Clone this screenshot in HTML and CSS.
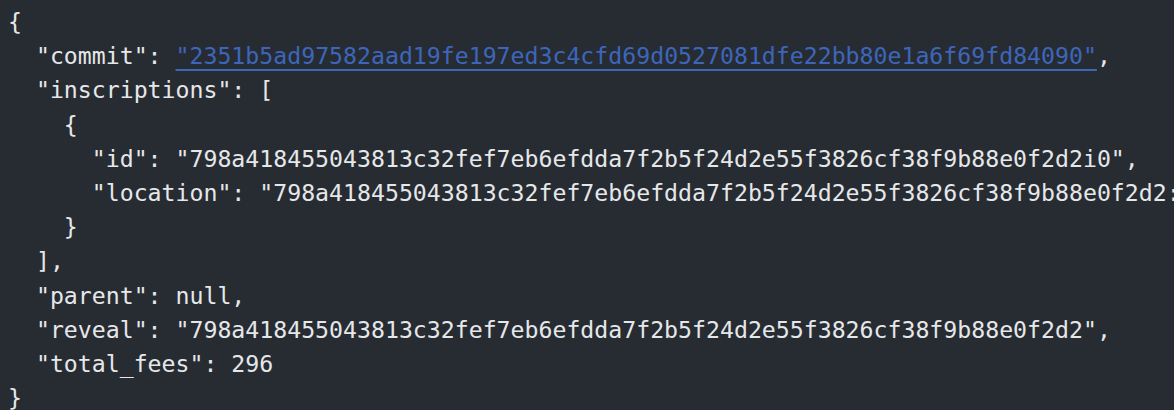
FILE: index.html
```html
<!DOCTYPE html>
<html>
<head>
    <meta name="viewport" content="width=device-width, initial-scale=1.0">
    <link rel="stylesheet" href="styles.css">
</head>
<body>
<pre class="json">{
  "commit": <a class="json-link" href="#">"2351b5ad97582aad19fe197ed3c4cfd69d0527081dfe22bb80e1a6f69fd84090"</a>,
  "inscriptions": [
    {
      "id": "798a418455043813c32fef7eb6efdda7f2b5f24d2e55f3826cf38f9b88e0f2d2i0",
      "location": "798a418455043813c32fef7eb6efdda7f2b5f24d2e55f3826cf38f9b88e0f2d2:0:0"
    }
  ],
  "parent": null,
  "reveal": "798a418455043813c32fef7eb6efdda7f2b5f24d2e55f3826cf38f9b88e0f2d2",
  "total_fees": 296
}</pre>
</body>
</html>
```

FILE: styles.css
```css
body {
    margin: 0;
    background: #272c33;
    overflow: hidden;
}
.json {
    margin: 0;
    padding: 5px 8px 0;
    font-family: "DejaVu Sans Mono", monospace;
    font-size: 23.2px;
    line-height: 34.2px;
    color: #e6e7e9;
    white-space: pre;
    overflow: hidden;
}
.json-link {
    color: #3d66bb;
    text-decoration: underline;
    text-decoration-thickness: 2px;
    text-underline-offset: 5px;
}
```
